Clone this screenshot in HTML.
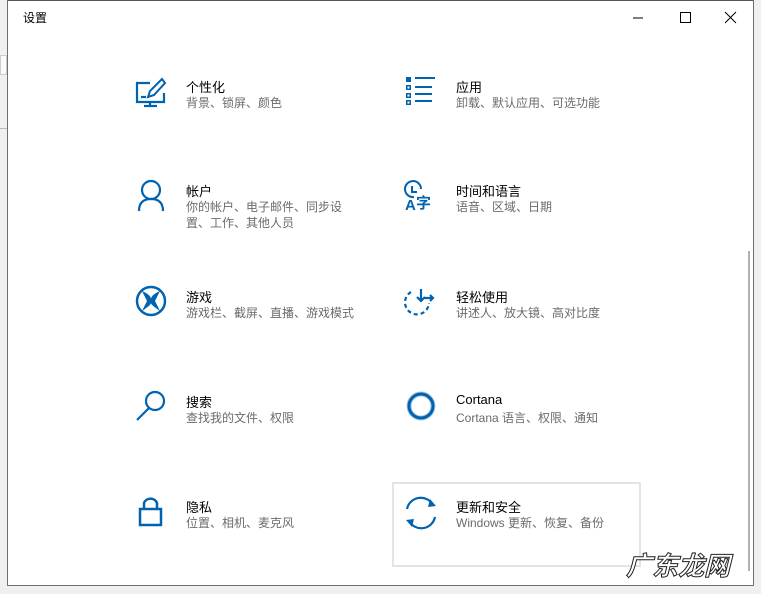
<!DOCTYPE html>
<html><head><meta charset="utf-8"><style>
*{margin:0;padding:0;box-sizing:border-box}
body{width:761px;height:594px;background:#f0f0f0;position:relative;overflow:hidden;font-family:"Liberation Sans","Noto Sans CJK SC",sans-serif}
.win{position:absolute;left:7px;top:0;width:747px;height:586px;background:#fff;border:1px solid #6f6f6f;border-top:1px solid #555}
.title{position:absolute;left:15px;top:8px;font-size:12px;color:#000}
.item{position:absolute}
.item .t{position:absolute;left:0;top:0;font-size:13px;color:#000;white-space:nowrap}
.item .s{position:absolute;left:0;top:18px;font-size:12px;color:#6b6b6b;line-height:16px;width:168px}
svg{position:absolute;overflow:visible}
.blue{stroke:#0063b1;fill:none}
</style></head><body>
<div style="position:absolute;left:0;top:55px;width:7px;height:20px;border:1px solid #ccc;background:#fafafa"></div>
<div style="position:absolute;left:0;top:128px;width:7px;height:1px;background:#bbb"></div>
<div class="win">
<div class="title">设置</div>
<svg width="740" height="30" style="left:0;top:0">
<line x1="625" y1="17" x2="635" y2="17" stroke="#000" stroke-width="1"/>
<rect x="672.5" y="11.5" width="10" height="10" stroke="#000" fill="none"/>
<path d="M717 11 L728 22 M728 11 L717 22" stroke="#000"/>
</svg>
<div style="position:absolute;left:740px;top:250px;width:2px;height:320px;background:#b0b0b0"></div>
<div style="position:absolute;left:384px;top:481px;width:249px;height:85px;border:2px solid #e4e4e4"></div>
</div>

<svg width="761" height="594" style="left:0;top:0">
<g class="blue" stroke-width="2.2">
<path d="M150 83 H137 V102 H164 V93"/>
<line x1="150" y1="102" x2="150" y2="106"/><line x1="144" y1="106" x2="157" y2="106"/>
<path d="M162 79 L150 91 L148 97 L154 95 L165 83 Z" stroke-width="2"/>
<line x1="141" y1="97" x2="146" y2="97"/>
</g>
<g fill="#0063b1" stroke="none">
<rect x="406" y="77" width="5" height="5"/><rect x="406" y="85" width="5" height="5"/><rect x="406" y="93" width="5" height="5"/><rect x="406" y="100" width="5" height="5"/>
<rect x="415" y="77" width="20" height="2"/><rect x="415" y="86" width="17" height="2"/><rect x="415" y="93" width="17" height="2"/><rect x="415" y="100" width="17" height="2"/>
</g>
<rect x="407.5" y="86.5" width="2" height="2" fill="#fff"/><rect x="407.5" y="94.5" width="2" height="2" fill="#fff"/><rect x="407.5" y="101.5" width="2" height="2" fill="#fff"/>
<g class="blue" stroke-width="2.2"><circle cx="151" cy="190" r="9"/><path d="M139 211 Q139 199 151 199 Q163 199 163 211"/></g>
<g class="blue" stroke-width="2"><path d="M414 197 A8 8 0 1 1 421 189"/><path d="M412 186 V192 H417"/></g>
<text x="405" y="210" font-size="15" font-weight="bold" fill="#0063b1" font-family="Liberation Sans">A</text>
<text x="416" y="208" font-size="15" font-weight="bold" fill="#0063b1" font-family="Noto Sans CJK SC">字</text>
<g class="blue"><circle cx="151" cy="301" r="14" stroke-width="2.5"/></g>
<path d="M142 291 Q151 295 151 299 Q151 295 160 291 L155 301 L160 311 Q151 305 151 303 Q151 305 142 311 L147 301 Z" fill="#0063b1"/>
<g class="blue" stroke-width="2.2"><path d="M411 292 A12 12 0 1 0 429 303" stroke-dasharray="4 3"/><path d="M421 289 V301 M417 297 L421 301 L425 297 M424 298 H433 M430 295 L433 298 L430 301"/></g>
<g class="blue" stroke-width="2.2"><circle cx="155" cy="401" r="9"/><line x1="149" y1="408" x2="137" y2="420"/></g>
<circle cx="421" cy="406" r="12" fill="none" stroke="#a9c9e6" stroke-width="5"/>
<circle cx="421" cy="406" r="12" fill="none" stroke="#0063b1" stroke-width="3"/>
<g class="blue" stroke-width="2.5"><rect x="140" y="509" width="21" height="16"/><path d="M144 509 V503 A7 7 0 0 1 157 503 V509"/></g>
<g class="blue" stroke-width="2.2"><path d="M407 509 A14 14 0 0 1 433 505"/><path d="M435 517 A14 14 0 0 1 409 521"/></g>
<path d="M430 499 L436 506 L428 507 Z M412 527 L406 520 L414 519 Z" fill="#0063b1"/>
</svg>

<div class="item" style="left:186px;top:77px"><div class="t">个性化</div><div class="s">背景、锁屏、颜色</div></div>
<div class="item" style="left:456px;top:77px"><div class="t">应用</div><div class="s">卸载、默认应用、可选功能</div></div>
<div class="item" style="left:186px;top:181px"><div class="t">帐户</div><div class="s" style="width:160px">你的帐户、电子邮件、同步设置、工作、其他人员</div></div>
<div class="item" style="left:456px;top:181px"><div class="t">时间和语言</div><div class="s">语音、区域、日期</div></div>
<div class="item" style="left:186px;top:287px"><div class="t">游戏</div><div class="s" style="width:200px">游戏栏、截屏、直播、游戏模式</div></div>
<div class="item" style="left:456px;top:287px"><div class="t">轻松使用</div><div class="s">讲述人、放大镜、高对比度</div></div>
<div class="item" style="left:186px;top:392px"><div class="t">搜索</div><div class="s">查找我的文件、权限</div></div>
<div class="item" style="left:456px;top:392px"><div class="t">Cortana</div><div class="s">Cortana 语言、权限、通知</div></div>
<div class="item" style="left:186px;top:497px"><div class="t">隐私</div><div class="s">位置、相机、麦克风</div></div>
<div class="item" style="left:456px;top:497px"><div class="t">更新和安全</div><div class="s">Windows 更新、恢复、备份</div></div>
<div style="position:absolute;left:626px;top:551px;font-size:26px;font-style:italic;color:#fff;-webkit-text-stroke:1px #222;font-family:'Noto Sans CJK SC',sans-serif;font-weight:bold;line-height:28px">广东龙网</div>
</body></html>
